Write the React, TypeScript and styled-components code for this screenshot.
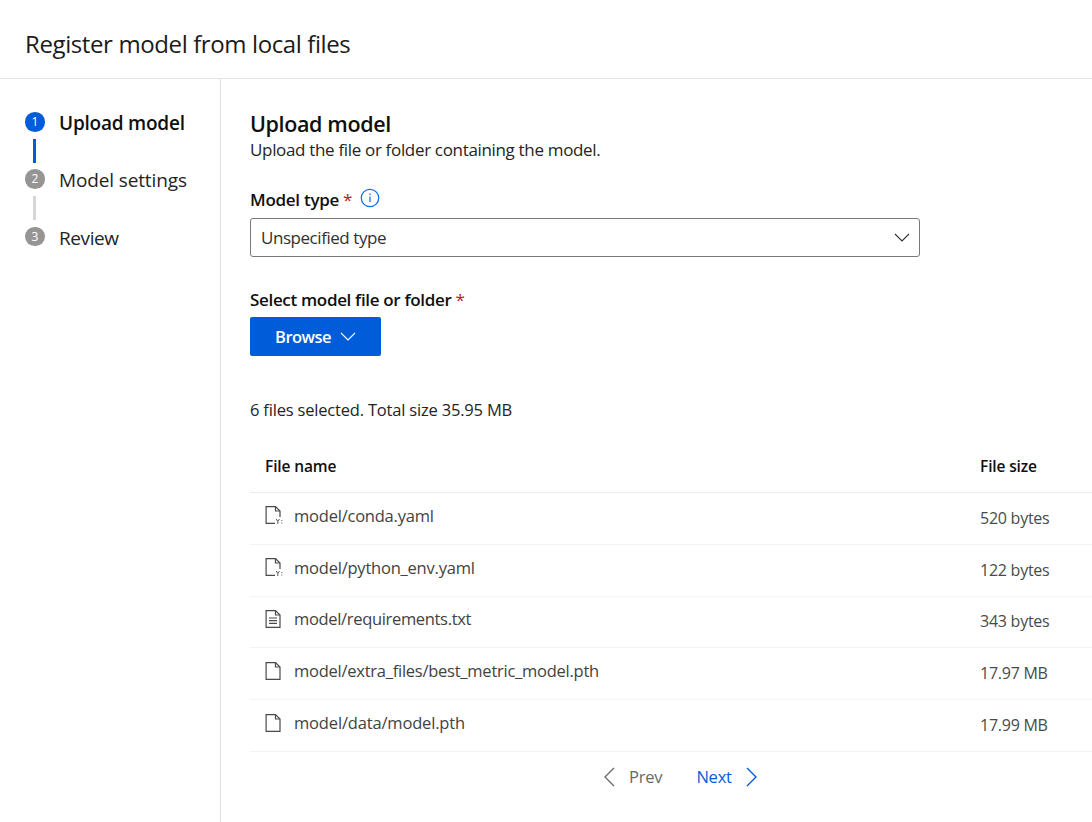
import React from "react";
import styled, { createGlobalStyle } from "styled-components";

const GlobalStyle = createGlobalStyle`
  * { box-sizing: border-box; }
  body {
    margin: 0;
    background: #fff;
    color: #242424;
    font-family: "Segoe UI", "Open Sans", "Noto Sans", sans-serif;
    overflow: hidden;
  }
  h1, h2, p, ol { margin: 0; padding: 0; }
`;

const Page = styled.div`
  display: flex;
  flex-direction: column;
  width: 1092px;
  height: 822px;
  overflow: hidden;
`;

const Header = styled.header`
  flex: none;
  height: 79px;
  padding: 28px 25px 0;
  border-bottom: 1px solid #e3e3e3;
`;

const Title = styled.h1`
  font-size: 24px;
  line-height: 32px;
  font-weight: 400;
  letter-spacing: -0.39px;
  color: #1b1b1b;
  white-space: nowrap;
`;

const Body = styled.div`
  display: flex;
  flex: 1;
  min-height: 0;
`;

const Sidebar = styled.nav`
  flex: none;
  width: 221px;
  padding: 33px 0 0 25px;
  border-right: 1px solid #e1e1e1;
`;

const StepList = styled.ol`
  list-style: none;
`;

const Step = styled.li`
  display: flex;
  gap: 14px;
  height: 57.3px;
`;

const StepTrack = styled.div`
  display: flex;
  flex-direction: column;
  align-items: center;
  width: 20px;
  gap: 7px;
`;

const StepBadge = styled.span<{ $active?: boolean }>`
  width: 19.6px;
  height: 19.6px;
  border-radius: 50%;
  background: ${(p) => (p.$active ? "#015cda" : "#979593")};
  color: #fff;
  font-size: 12px;
  line-height: 20px;
  text-align: center;
`;

const StepLine = styled.span<{ $active?: boolean }>`
  width: 3px;
  height: 24px;
  margin-right: 1px;
  background: ${(p) => (p.$active ? "#015cda" : "#d6d6d6")};
`;

const StepLabel = styled.span<{ $active?: boolean; $tracking: number }>`
  font-size: 19px;
  line-height: 22px;
  font-weight: ${(p) => (p.$active ? 600 : 400)};
  color: ${(p) => (p.$active ? "#0f0f0f" : "#242424")};
  letter-spacing: ${(p) => p.$tracking}px;
  white-space: nowrap;
`;

const Main = styled.main`
  flex: 1;
  min-width: 0;
  padding: 31px 0 0 29px;
`;

const SectionTitle = styled.h2`
  font-size: 21.5px;
  line-height: 28px;
  font-weight: 600;
  letter-spacing: -0.38px;
  color: #0f0f0f;
`;

const Description = styled.p`
  font-size: 17px;
  line-height: 24px;
  letter-spacing: -0.33px;
`;

const FieldLabel = styled.div<{ $tracking: number }>`
  display: flex;
  align-items: center;
  height: 24px;
  margin-top: 25px;
  font-size: 17px;
  font-weight: 600;
  letter-spacing: ${(p) => p.$tracking}px;
  color: #0f0f0f;

  button + & {
    margin-top: 30px;
  }
`;

const Required = styled.span`
  margin-left: 4px;
  color: #b0202a;
  font-weight: 400;
`;

const InfoIcon = styled.svg`
  margin-left: 7.5px;
  margin-top: -2px;
`;

const Select = styled.button`
  display: flex;
  align-items: center;
  justify-content: space-between;
  width: 670px;
  height: 39px;
  margin-top: 7px;
  padding: 0 9px 0 10px;
  border: 1px solid #7b7977;
  border-radius: 3px;
  background: #fff;
  color: #323130;
  font: inherit;
  font-size: 17px;
  letter-spacing: -0.45px;
`;

const BrowseButton = styled.button`
  display: flex;
  align-items: center;
  gap: 9px;
  width: 131px;
  height: 39px;
  margin-top: 6px;
  padding: 0 24px 0 25px;
  border: 0;
  border-radius: 2px;
  background: #015cda;
  color: #fff;
  font: inherit;
  font-size: 16.5px;
  font-weight: 600;
  letter-spacing: -0.5px;
`;

const Summary = styled.p`
  margin-top: 42px;
  font-size: 16.5px;
  line-height: 24px;
  letter-spacing: -0.19px;
`;

const Table = styled.div`
  margin-top: 18px;
`;

const Row = styled.div<{ $head?: boolean }>`
  display: grid;
  grid-template-columns: 715px 1fr;
  align-items: center;
  height: ${(p) => (p.$head ? 53 : 51.8)}px;
  padding-left: 15px;
  border-bottom: 1px solid ${(p) => (p.$head ? "#ececec" : "#f4f4f4")};
`;

const HeadCell = styled.span`
  font-size: 15.5px;
  font-weight: 600;
  letter-spacing: -0.13px;
  color: #0f0f0f;
`;

const NameCell = styled.span<{ $tracking: number }>`
  display: flex;
  align-items: center;
  gap: 11px;
  padding-bottom: 6px;
  font-size: 16.5px;
  letter-spacing: ${(p) => p.$tracking}px;
  color: #424242;
`;

const SizeCell = styled.span`
  padding-bottom: 1.4px;
  font-size: 16px;
  letter-spacing: -0.25px;
  color: #4a4a4a;
`;

const Pager = styled.div`
  display: flex;
  align-items: center;
  height: 24px;
  margin-top: 13px;
  padding-left: 353px;
`;

const PagerButton = styled.button<{ $active?: boolean }>`
  display: flex;
  align-items: center;
  gap: 14px;
  margin-right: 34px;
  padding: 0;
  border: 0;
  background: none;
  color: ${(p) => (p.$active ? "#015cda" : "#686868")};
  font: inherit;
  font-size: 16.5px;
  line-height: 24px;
  letter-spacing: -0.2px;
`;

const Chevron = () => (
  <svg width="16" height="9" viewBox="0 0 16 9" fill="none" stroke="currentColor" strokeWidth="1.1">
    <path d="M1 1l7 7 7-7" />
  </svg>
);

type FileKind = "yaml" | "text" | "blank";

const FileIcon = ({ kind }: { kind: FileKind }) => (
  <svg width="18" height="20" viewBox="0 0 18 20" fill="none" stroke="#4a4a4a" strokeWidth="1.2">
    {kind === "yaml" ? (
      <>
        <path d="M10 18.4H1.1V1.6H10.5L15 6V12" />
        <path d="M10.5 1.6V6H15" />
        <path d="M11.2 14l1.6 2.4M14.4 14l-1.6 2.4V19M16.8 15v1M16.8 17.5v1" strokeWidth="0.9" />
      </>
    ) : (
      <>
        <path d="M1.1 1.6H10.5L15 6V18.4H1.1Z" />
        <path d="M10.5 1.6V6H15" />
      </>
    )}
    {kind === "text" && <path d="M4 9h8M4 11.7h8M4 14.4h8" />}
  </svg>
);

const files: { name: string; size: string; kind: FileKind; tracking: number }[] = [
  { name: "model/conda.yaml", size: "520 bytes", kind: "yaml", tracking: -0.22 },
  { name: "model/python_env.yaml", size: "122 bytes", kind: "yaml", tracking: -0.22 },
  { name: "model/requirements.txt", size: "343 bytes", kind: "text", tracking: -0.33 },
  { name: "model/extra_files/best_metric_model.pth", size: "17.97 MB", kind: "blank", tracking: -0.25 },
  { name: "model/data/model.pth", size: "17.99 MB", kind: "blank", tracking: -0.17 },
];

const steps = [
  { label: "Upload model", active: true, tracking: -0.22 },
  { label: "Model settings", active: false, tracking: -0.13 },
  { label: "Review", active: false, tracking: -0.4 },
];

export default function App() {
  return (
    <Page>
      <GlobalStyle />
      <Header>
        <Title>Register model from local files</Title>
      </Header>
      <Body>
        <Sidebar>
          <StepList>
            {steps.map((step, i) => (
              <Step key={step.label}>
                <StepTrack>
                  <StepBadge $active={step.active}>{i + 1}</StepBadge>
                  {i < steps.length - 1 && <StepLine $active={step.active} />}
                </StepTrack>
                <StepLabel $active={step.active} $tracking={step.tracking}>
                  {step.label}
                </StepLabel>
              </Step>
            ))}
          </StepList>
        </Sidebar>
        <Main>
          <SectionTitle>Upload model</SectionTitle>
          <Description>Upload the file or folder containing the model.</Description>

          <FieldLabel $tracking={-0.27}>
            Model type<Required>*</Required>
            <InfoIcon width="20" height="20" viewBox="0 0 20 20" fill="none" stroke="#1a6fe8" strokeWidth="1.3">
              <circle cx="10" cy="10" r="8.7" />
              <path d="M10 8.5V14M10 5.6V7" />
            </InfoIcon>
          </FieldLabel>
          <Select>
            Unspecified type
            <Chevron />
          </Select>

          <FieldLabel $tracking={-0.33}>
            Select model file or folder<Required>*</Required>
          </FieldLabel>
          <BrowseButton>
            Browse
            <Chevron />
          </BrowseButton>

          <Summary>6 files selected. Total size 35.95 MB</Summary>

          <Table>
            <Row $head>
              <HeadCell>File name</HeadCell>
              <HeadCell>File size</HeadCell>
            </Row>
            {files.map((file) => (
              <Row key={file.name}>
                <NameCell $tracking={file.tracking}>
                  <FileIcon kind={file.kind} />
                  {file.name}
                </NameCell>
                <SizeCell>{file.size}</SizeCell>
              </Row>
            ))}
          </Table>

          <Pager>
            <PagerButton>
              <svg width="12" height="20" viewBox="0 0 12 20" fill="none" stroke="currentColor" strokeWidth="1.3">
                <path d="M11 1L2 10l9 9" />
              </svg>
              Prev
            </PagerButton>
            <PagerButton $active>
              Next
              <svg width="12" height="20" viewBox="0 0 12 20" fill="none" stroke="currentColor" strokeWidth="1.4">
                <path d="M1 1l9 9-9 9" />
              </svg>
            </PagerButton>
          </Pager>
        </Main>
      </Body>
    </Page>
  );
}
